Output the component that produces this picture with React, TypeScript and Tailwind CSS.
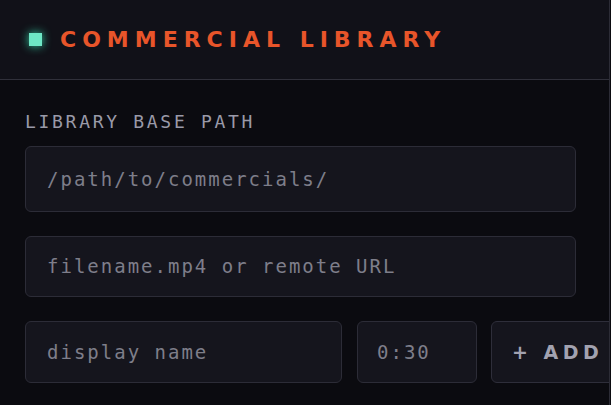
import React from 'react';

const field =
  "h-full rounded-[6px] bg-[#15151d] border border-[#2c2c37] flex items-center font-['DejaVu_Sans_Mono','Liberation_Mono',monospace] text-[19px] tracking-[2px] text-[#7e7e8a]";

export default function App() {
  return (
    <div className="w-[611px] h-[405px] bg-[#0b0b10] overflow-hidden">
      <div className="w-[610px] h-[405px] border-r border-[#2c2c36] overflow-hidden">
        {/* Header */}
        <div className="h-[80px] bg-[#111118] border-b border-[#30303a] flex items-center pl-[29px]">
          <div className="w-[13px] h-[13px] bg-[#6ee7c5] shadow-[0_0_10px_#34d3a7]" />
          <h2 className="ml-[18px] font-['DejaVu_Sans','Liberation_Sans',sans-serif] text-[22px] font-bold tracking-[6px] text-[#e8552a] leading-none">
            COMMERCIAL LIBRARY
          </h2>
        </div>

        {/* Body */}
        <div className="pl-[25px] pr-[33px] pt-[33px] flex flex-col">
          <label className="block font-['DejaVu_Sans_Mono','Liberation_Mono',monospace] text-[18px] leading-[18px] tracking-[2.7px] text-[#9a9aa8] mb-[15px]">
            LIBRARY BASE PATH
          </label>
          <div className="h-[66px]">
            <div className={`${field} pl-[21px]`}>/path/to/commercials/</div>
          </div>
          <div className="h-[61px] mt-[24px]">
            <div className={`${field} pl-[21px]`}>filename.mp4 or remote URL</div>
          </div>
          <div className="mt-[24px] h-[62px] flex gap-[15px] w-[700px]">
            <div className="w-[317px] h-full">
              <div className={`${field} pl-[21px]`}>display name</div>
            </div>
            <div className="w-[120px] h-full">
              <div className={`${field} pl-[19px]`}>0:30</div>
            </div>
            <button className="w-[140px] h-full -ml-px rounded-[6px] bg-[#15151d] border border-[#2e2e3a] flex items-center pl-[20px] font-['DejaVu_Sans','Liberation_Sans',sans-serif] text-[19px] font-bold tracking-[4.5px] text-[#a2a2b0]">
              + ADD
            </button>
          </div>
        </div>
      </div>
    </div>
  );
}
